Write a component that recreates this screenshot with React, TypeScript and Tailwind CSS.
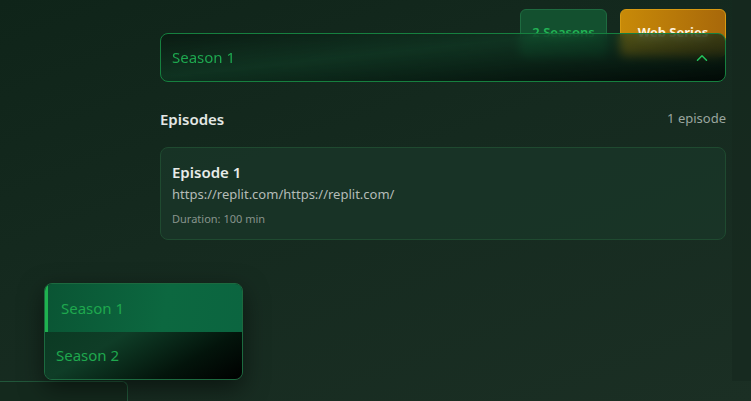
import { ChevronUp } from 'lucide-react'

const font = { fontFamily: '"Noto Sans", "Open Sans", sans-serif' }

const SeasonMenu = () => {
  return (
    <div className="absolute left-[44px] top-[283px] z-20 w-[199px] overflow-hidden rounded-lg border border-[#1c6a3f] shadow-[0_8px_24px_rgba(0,0,0,0.5)]">
      <div className="flex h-[48px] items-center border-l-[3px] border-[#1fb24f] bg-[linear-gradient(100deg,#0a5534_0%,#0c6840_60%,#0b6540_100%)] pl-[13px] text-[15px] text-[#1fa84e]">
        Season 1
      </div>
      <div className="flex h-[47px] items-center bg-[linear-gradient(150deg,#0b3a23_0%,#0f3d27_30%,#03140b_70%,#000000_100%)] pl-[11px] text-[15px] text-[#1fa84e]">
        Season 2
      </div>
    </div>
  )
}

const App = () => {
  return (
    <div
      className="relative flex h-[401px] w-[751px] flex-col overflow-hidden bg-[linear-gradient(160deg,#0f2419_0%,#152a1f_45%,#1b2f24_100%)]"
      style={font}
    >
      <div className="flex flex-1">
        <div className="flex-1 pl-[160px] pr-[6px] pt-[9px]">
          <div className="flex justify-end gap-[13px]">
            <div className="flex h-[48px] w-[87px] items-center justify-center rounded-md border border-[#1e6b40] bg-[#13502f] text-[13px] font-semibold text-[#22b455]">
              2 Seasons
            </div>
            <div className="flex h-[48px] w-[106px] items-center justify-center rounded-md border border-[#d89a12] bg-[linear-gradient(90deg,#c88a08_0%,#a8680a_100%)] text-[13px] font-bold text-[#fff3dc]">
              Web Series
            </div>
          </div>

          <div className="relative z-10 -mt-[24px] flex h-[49px] items-center justify-between rounded-lg border border-[#16803f] bg-[linear-gradient(174deg,rgba(1,10,5,0.35)_0%,rgba(14,58,36,0.6)_40%,rgba(1,8,5,0.95)_100%)] pl-[11px] pr-[14px] backdrop-blur-[5px]">
            <span className="text-[15px] text-[#1ea84f]">Season 1</span>
            <ChevronUp size={18} strokeWidth={2} className="text-[#22c55e]" />
          </div>

          <div className="mt-[27px] flex items-center justify-between">
            <h2 className="text-[15px] font-semibold leading-5 text-[#e4e8e5]">Episodes</h2>
            <span className="text-[13px] text-[#9aa69f]">1 episode</span>
          </div>

          <div className="mt-[18px] rounded-lg border border-[#1f4a30] bg-[#19382a]/70 px-[11px] pb-[12px] pt-[14px]">
            <h3 className="text-[15px] font-semibold leading-5 text-[#e8ece9]">Episode 1</h3>
            <p className="mt-[2px] text-[13px] leading-5 text-[#b4bcb7]">https://replit.com/https://replit.com/</p>
            <p className="mt-[7px] text-[11px] leading-4 text-[#87938c]">Duration: 100 min</p>
          </div>
        </div>
        <div className="w-[19px] bg-[#16281e]/60" />
      </div>

      <div className="h-[20px] w-[128px] rounded-tr-md border-r border-t border-[#21573a] bg-[#14291d]" />

      <SeasonMenu />
    </div>
  )
}

export default App
